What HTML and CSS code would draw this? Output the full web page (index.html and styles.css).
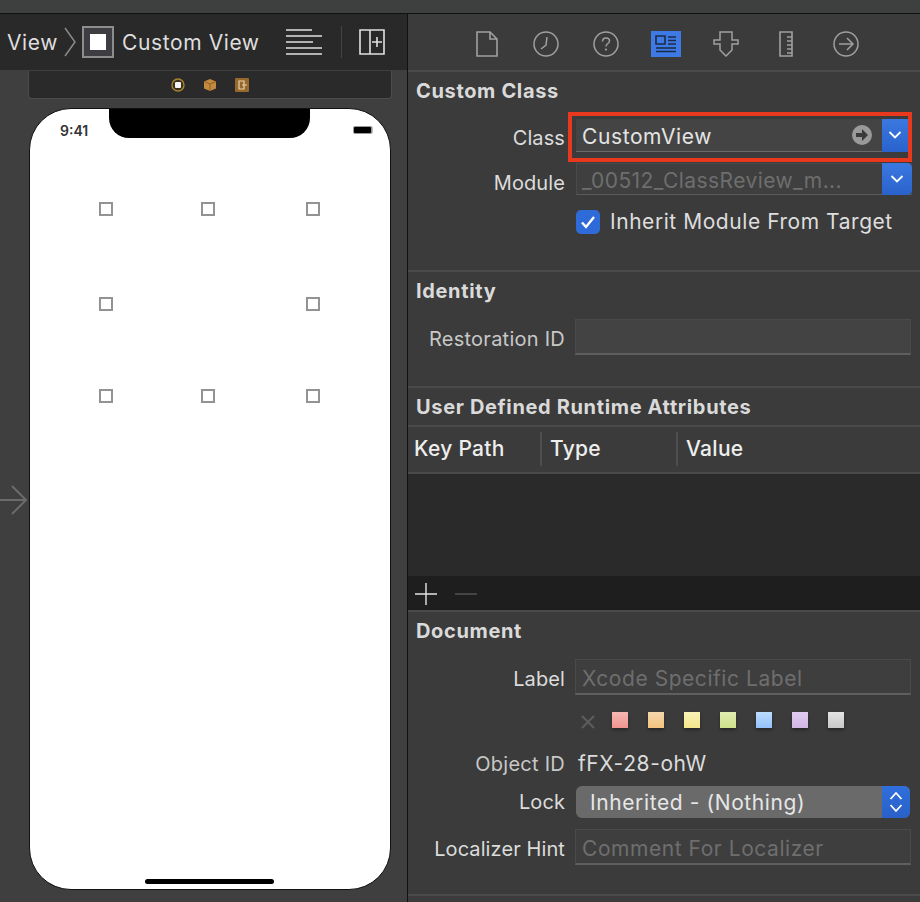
FILE: index.html
```html
<!DOCTYPE html>
<html>
<head>
    <title>Custom View - Identity Inspector</title>
    <meta charset="UTF-8">
    <link rel="stylesheet" href="styles.css">
</head>

<body>
    <div class="titlebar"></div>
    <div class="main">
        <div class="editor">
            <div class="jumpbar">
                <span class="crumb">View</span>
                <svg class="crumb-sep" width="12" height="32" viewBox="0 0 12 32"><path d="M1 2 L11 16 L1 30" fill="none" stroke="#8a8a8a" stroke-width="1.5"/></svg>
                <span class="view-icon"><span class="view-icon-fill"></span></span>
                <span class="crumb">Custom View</span>
                <svg class="lines-icon" width="36" height="26" viewBox="0 0 36 26"><path d="M0 1H26M0 7H36M0 13H27M0 19H36M0 25H36" stroke="#e0e0e0" stroke-width="1.4"/></svg>
                <span class="jump-divider"></span>
                <svg class="split-icon" width="26" height="26" viewBox="0 0 26 26"><path d="M1 1H25V25H1ZM11 1V25M18 8V18M13 13H23" fill="none" stroke="#e0e0e0" stroke-width="1.6"/></svg>
            </div>
            <div class="canvas">
                <div class="scene-bar">
                    <svg width="14" height="14" viewBox="0 0 14 14"><circle cx="7" cy="7" r="6" fill="#3a3020" stroke="#a8842f" stroke-width="1.4"/><rect x="4" y="4" width="6" height="6" rx="1" fill="#f4f4f4"/></svg>
                    <svg width="14" height="14" viewBox="0 0 14 14"><path d="M7 1L13 3.5V10.5L7 13L1 10.5V3.5Z" fill="#c28a3e"/><path d="M1 3.5L7 6L13 3.5M7 6V13" fill="none" stroke="#8d6227" stroke-width="1"/></svg>
                    <svg width="14" height="14" viewBox="0 0 14 14"><rect width="14" height="14" rx="1" fill="#96682c"/><path d="M4 3H9V11H4ZM7 7H12" fill="none" stroke="#e8d2a8" stroke-width="1.2"/></svg>
                </div>
                <div class="scene">
                    <svg class="entry-arrow" width="28" height="32" viewBox="0 0 28 32"><path d="M0 16H26M12 2L26 16L12 30" fill="none" stroke="#6b6b6b" stroke-width="2"/></svg>
                    <div class="phone">
                        <div class="status">
                            <span class="time">9:41</span>
                            <span class="notch"></span>
                            <span class="battery"></span>
                        </div>
                        <div class="handles">
                            <span class="handle"></span><span class="handle"></span><span class="handle"></span>
                            <span class="handle"></span><span></span><span class="handle"></span>
                            <span class="handle"></span><span class="handle"></span><span class="handle"></span>
                        </div>
                        <div class="home-bar"></div>
                    </div>
                </div>
            </div>
        </div>

        <div class="inspector">
            <div class="tabs">
                <svg width="22" height="26" viewBox="0 0 22 26"><path d="M1 1H14L21 8V25H1ZM14 1V8H21" fill="none" stroke="#a0a0a0" stroke-width="1.6"/></svg>
                <svg width="26" height="26" viewBox="0 0 26 26"><circle cx="13" cy="13" r="12" fill="none" stroke="#a0a0a0" stroke-width="1.5"/><path d="M14 6L13 14L8 18" fill="none" stroke="#a0a0a0" stroke-width="1.5"/></svg>
                <svg width="26" height="26" viewBox="0 0 26 26"><circle cx="13" cy="13" r="12" fill="none" stroke="#a0a0a0" stroke-width="1.5"/><path d="M9.5 10.5C9.5 8 11 7 13 7C15 7 16.5 8.2 16.5 10C16.5 12.5 13 12.5 13 15.5" fill="none" stroke="#a0a0a0" stroke-width="1.5"/><circle cx="13" cy="18.6" r="1.1" fill="#a0a0a0"/></svg>
                <svg width="30" height="26" viewBox="0 0 30 26"><rect width="30" height="26" fill="#3d7ae6"/><path d="M5 5H14V13H5ZM17 6H25M17 9.5H25M17 13H25M5 17H25M5 20.5H25" fill="none" stroke="#1e2a44" stroke-width="1.6"/></svg>
                <svg width="26" height="26" viewBox="0 0 26 26"><path d="M7 1H19V9H25V13H19V19L13 25L7 19V13H1V9H7Z" fill="none" stroke="#a0a0a0" stroke-width="1.5"/></svg>
                <svg width="14" height="26" viewBox="0 0 14 26"><path d="M1 1H13V25H1ZM13 6H8M13 10H8M13 14H8M13 18H8M13 22H8" fill="none" stroke="#a0a0a0" stroke-width="1.6"/></svg>
                <svg width="26" height="26" viewBox="0 0 26 26"><circle cx="13" cy="13" r="12" fill="none" stroke="#a0a0a0" stroke-width="1.5"/><path d="M6 13H19M14 7L20 13L14 19" fill="none" stroke="#a0a0a0" stroke-width="1.5"/></svg>
            </div>

            <section class="section section-class">
                <h2>Custom Class</h2>
                <div class="row row-class">
                    <label>Class</label>
                    <div class="combo">
                        <span class="combo-text">CustomView</span>
                        <svg class="go-icon" width="20" height="20" viewBox="0 0 20 20"><circle cx="10" cy="10" r="10" fill="#9a9a9a"/><path d="M4 8H10V4L16 10L10 16V12H4Z" fill="#3a3a3a"/></svg>
                        <span class="combo-btn"><svg width="14" height="8" viewBox="0 0 14 8"><path d="M1.500 1L7 6.500L12.500 1" fill="none" stroke="#fff" stroke-width="1.800"/></svg></span>
                    </div>
                    <div class="highlight"></div>
                </div>
                <div class="row row-module">
                    <label>Module</label>
                    <div class="combo combo-off">
                        <span class="combo-text">_00512_ClassReview_m...</span>
                        <span class="combo-btn"><svg width="14" height="8" viewBox="0 0 14 8"><path d="M1.500 1L7 6.500L12.500 1" fill="none" stroke="#fff" stroke-width="1.800"/></svg></span>
                    </div>
                </div>
                <div class="row row-check">
                    <span></span>
                    <div class="check-wrap">
                        <span class="checkbox"><svg width="16" height="14" viewBox="0 0 16 14"><path d="M2 7.500L6 12L14 2" fill="none" stroke="#fff" stroke-width="2.400"/></svg></span>
                        <span class="check-label">Inherit Module From Target</span>
                    </div>
                </div>
            </section>

            <section class="section section-identity">
                <h2>Identity</h2>
                <div class="row row-field">
                    <label class="dim">Restoration ID</label>
                    <div class="field"></div>
                </div>
            </section>

            <section class="section section-attrs">
                <h2>User Defined Runtime Attributes</h2>
            </section>
            <div class="table-head">
                <span class="col col-key">Key Path</span>
                <span class="col col-type">Type</span>
                <span class="col">Value</span>
            </div>
            <div class="table-body"></div>
            <div class="table-tools">
                <svg width="22" height="22" viewBox="0 0 22 22"><path d="M11 0V22M0 11H22" stroke="#e4e4e4" stroke-width="1.400"/></svg>
                <svg width="22" height="22" viewBox="0 0 22 22"><path d="M0 11H22" stroke="#555" stroke-width="1.400"/></svg>
            </div>

            <section class="section section-doc">
                <h2>Document</h2>
                <div class="row row-field">
                    <label>Label</label>
                    <div class="field placeholder">Xcode Specific Label</div>
                </div>
                <div class="row row-colors">
                    <span></span>
                    <div class="colors">
                        <svg class="clear" width="14" height="14" viewBox="0 0 14 14"><path d="M1 1L13 13M13 1L1 13" stroke="#5c5c5c" stroke-width="2.200"/></svg>
                        <span class="swatch sw-red"></span>
                        <span class="swatch sw-orange"></span>
                        <span class="swatch sw-yellow"></span>
                        <span class="swatch sw-green"></span>
                        <span class="swatch sw-blue"></span>
                        <span class="swatch sw-purple"></span>
                        <span class="swatch sw-gray"></span>
                    </div>
                </div>
                <div class="row row-object">
                    <label class="dim">Object ID</label>
                    <span class="object-id">fFX-28-ohW</span>
                </div>
                <div class="row row-lock">
                    <label>Lock</label>
                    <div class="popup">
                        <span class="popup-text">Inherited - (Nothing)</span>
                        <span class="popup-btn"><svg width="14" height="22" viewBox="0 0 14 22"><path d="M1.500 8L7 2L12.500 8M1.500 14L7 20L12.500 14" fill="none" stroke="#fff" stroke-width="1.800"/></svg></span>
                    </div>
                </div>
                <div class="row row-hint">
                    <label>Localizer Hint</label>
                    <div class="field placeholder">Comment For Localizer</div>
                </div>
            </section>
        </div>
    </div>
</body>
</html>
```

FILE: styles.css
```css
html, body { margin: 0; padding: 0; }
body { width: 920px; height: 902px; overflow: hidden; background-color: #3b3b3b; font-family: 'Inter', 'Roboto', sans-serif; font-size: 20px; color: #dcdcdc; }

.titlebar { height: 13px; background-color: #3e4040; }
.main { display: flex; height: 889px; border-top: 1px solid #111; }

/* left side, storyboard */
.editor { width: 407px; border-right: 1px solid #111; display: flex; flex-direction: column; }
.jumpbar { height: 56px; flex-shrink: 0; background-color: #292929; display: flex; align-items: center; padding-left: 7px; box-sizing: border-box; }
.crumb { font-size: 21px; letter-spacing: .6px; color: #dedede; white-space: nowrap; }
.crumb-sep { margin-left: 6px; margin-right: 6px; }
.view-icon { width: 32px; height: 32px; box-sizing: border-box; border: 2px solid #8d8d8d; background-color: #3e3e42; display: flex; align-items: center; justify-content: center; margin-right: 8px; }
.view-icon-fill { width: 16px; height: 16px; background-color: #fff; }
.lines-icon { margin-left: 26px; }
.jump-divider { width: 1px; height: 32px; background-color: #444; margin-left: 19px; }
.split-icon { margin-left: 17px; }

.canvas { flex: 1; background-color: #3f3f3f; position: relative; }
.scene-bar { width: 364px; height: 28px; margin: 1px 0 0 28px; box-sizing: border-box; background-color: #2a2a2a; border: 1px solid #4c4c4c; border-top: 0; border-radius: 0 0 4px 4px; display: flex; align-items: center; justify-content: center; gap: 18px; }
.scene { display: flex; padding: 9px 0 0 29px; }
.entry-arrow { position: absolute; left: 0; top: 414px; }

.phone { width: 362px; height: 782px; box-sizing: border-box; background-color: #fff; border: 1px solid #111; border-radius: 42px; display: flex; flex-direction: column; overflow: hidden; }
.status { display: flex; height: 29px; align-items: flex-start; }
.time { width: 79px; padding: 14px 0 0 30px; box-sizing: border-box; font-size: 14px; font-weight: 600; color: #333; line-height: 16px; }
.notch { width: 201px; height: 29px; background-color: #000; border-radius: 0 0 20px 20px; }
.battery { width: 19px; height: 8px; margin: 17px 0 0 43px; background-color: #000; border: 1px solid #999; border-radius: 2px; box-sizing: border-box; box-shadow: 1px 0 0 #bbb; }
.handles { display: grid; grid-template-columns: 102px 105px 14px; grid-template-rows: 95px 92px 14px; margin: 64px 0 0 69px; }
.handle { width: 14px; height: 14px; box-sizing: border-box; border: 2px solid #939393; background-color: #fff; }
.home-bar { width: 129px; height: 5px; background-color: #000; border-radius: 3px; margin: auto 0 5px 115px; }

/* right side, inspector */
.inspector { flex: 1; display: flex; flex-direction: column; }
.tabs { height: 58px; flex-shrink: 0; box-sizing: border-box; border-bottom: 2px solid #4a4a4a; display: flex; align-items: center; padding-top: 4px; }
.tabs svg:nth-child(1) { margin-left: 68px; }
.tabs svg:nth-child(2) { margin-left: 35px; }
.tabs svg:nth-child(3) { margin-left: 34px; }
.tabs svg:nth-child(4) { margin-left: 32px; }
.tabs svg:nth-child(5) { margin-left: 32px; }
.tabs svg:nth-child(6) { margin-left: 40px; }
.tabs svg:nth-child(7) { margin-left: 40px; }

.section { box-sizing: border-box; border-bottom: 2px solid #4a4a4a; padding-top: 7px; flex-shrink: 0; }
.section-class { height: 200px; }
.section-identity { height: 116px; }
.section-attrs { height: 39px; }
.section-doc { height: 286px; }
h2 { margin: 0; padding-left: 8px; font-size: 20px; letter-spacing: .65px; line-height: 24px; font-weight: 700; color: #dadada; }

.row { display: grid; grid-template-columns: 157px 1fr; column-gap: 10px; position: relative; }
.row label { text-align: right; font-size: 20px; letter-spacing: .1px; white-space: nowrap; }
.row .dim { color: #c8c8c8; letter-spacing: .25px; }
.row-class { margin-top: 16px; }
.row-class label { padding-top: 7px; }
.row-module { margin-top: 11px; }
.row-module label { padding-top: 8px; }
.row-check { margin-top: 15px; }
.row-field { margin-top: 16px; }
.row-field label { padding-top: 8px; }
.row-colors { margin-top: 17px; }
.row-object { margin-top: 24px; }
.row-lock { margin-top: 10px; }
.row-lock label { padding-top: 4px; }
.row-hint { margin-top: 11px; }
.row-hint label { padding-top: 8px; }

.combo { height: 33px; width: 332px; margin-left: 1px; box-sizing: border-box; background-color: #444; border-bottom: 1px solid #6a6a6a; display: flex; align-items: center; padding-left: 6px; }
.combo-text { flex: 1; padding-top: 2px; font-size: 21px; letter-spacing: .6px; color: #e4e4e4; white-space: nowrap; }
.go-icon { margin-right: 10px; }
.combo-btn { width: 26px; height: 33px; box-sizing: border-box; background: linear-gradient(#3a78e0, #2a62cc); display: flex; align-items: center; justify-content: center; }
.combo-off { width: 336px; height: 32px; background-color: #3f3f3f; border: 1px solid #4a4a4a; border-bottom-color: #5a5a5a; padding-left: 5px; }
.combo-off .combo-text { color: #6e6e6e; letter-spacing: .43px; }
.combo-off .combo-btn { width: 30px; height: 32px; margin: -1px -1px -1px 0; border-radius: 0 5px 5px 0; }
.highlight { position: absolute; left: 160px; top: -7px; width: 344px; height: 50px; box-sizing: border-box; border: 4px solid #e8391f; }

.check-wrap { display: flex; align-items: center; gap: 10px; margin-left: 1px; font-size: 21px; letter-spacing: .55px; color: #dedede; height: 24px; white-space: nowrap; }
.check-label { margin-top: -2px; }
.checkbox { width: 24px; height: 24px; border-radius: 5px; background-color: #2f6bd8; display: flex; align-items: center; justify-content: center; }

.field { height: 36px; width: 336px; box-sizing: border-box; background-color: #434343; border: 1px solid #4a4a4a; border-bottom: 2px solid #5f5f5f; padding-left: 6px; line-height: 37px; font-size: 21px; letter-spacing: .55px; white-space: nowrap; }
.placeholder { background-color: #3e3e3e; color: #6e6e6e; }

.table-head { height: 47px; flex-shrink: 0; box-sizing: border-box; border-bottom: 2px solid #4a4a4a; display: flex; align-items: center; padding-bottom: 2px; font-size: 21px; font-weight: 500; letter-spacing: .3px; color: #eee; }
.col { padding-left: 8px; white-space: nowrap; }
.col-key { width: 134px; box-sizing: border-box; padding-left: 6px; border-right: 2px solid #4e4e4e; line-height: 34px; }
.col-type { width: 136px; box-sizing: border-box; border-right: 2px solid #4e4e4e; line-height: 34px; }
.table-body { height: 102px; flex-shrink: 0; background-color: #2a2a2a; }
.table-tools { height: 34px; flex-shrink: 0; background-color: #1e1e1e; display: flex; align-items: center; gap: 18px; padding: 2px 0 0 7px; box-sizing: border-box; }
.table-tools + .section { border-top: 2px solid #4a4a4a; }

.colors { display: flex; align-items: center; height: 16px; padding-left: 6px; }
.clear { margin-right: 17px; margin-top: 4px; }
.swatch { width: 16px; height: 16px; margin-right: 20px; box-shadow: 0 2px 3px rgba(0, 0, 0, .35); }
.sw-red { background: linear-gradient(#f6b8b4, #ee9490); }
.sw-orange { background: linear-gradient(#f6d6ae, #f2c47e); }
.sw-yellow { background: linear-gradient(#f9f3b8, #f4e68a); }
.sw-green { background: linear-gradient(#e0ecb0, #cfe08a); }
.sw-blue { background: linear-gradient(#bcdcff, #92c2fa); }
.sw-purple { background: linear-gradient(#e2ccf0, #d2b6e6); }
.sw-gray { background: linear-gradient(#e4e4e4, #c8c8c8); }

.object-id { margin-left: 3px; font-size: 21px; letter-spacing: .6px; line-height: 24px; color: #dcdcdc; white-space: nowrap; }

.popup { height: 32px; width: 334px; margin-left: 1px; background-color: #6a6a6a; border-radius: 6px; display: flex; align-items: center; overflow: hidden; }
.popup-text { flex: 1; padding-left: 14px; font-size: 21px; letter-spacing: .6px; color: #e6e6e6; white-space: nowrap; }
.popup-btn { width: 28px; height: 32px; background: linear-gradient(#2f6fdc, #2a60c8); display: flex; align-items: center; justify-content: center; }
```
